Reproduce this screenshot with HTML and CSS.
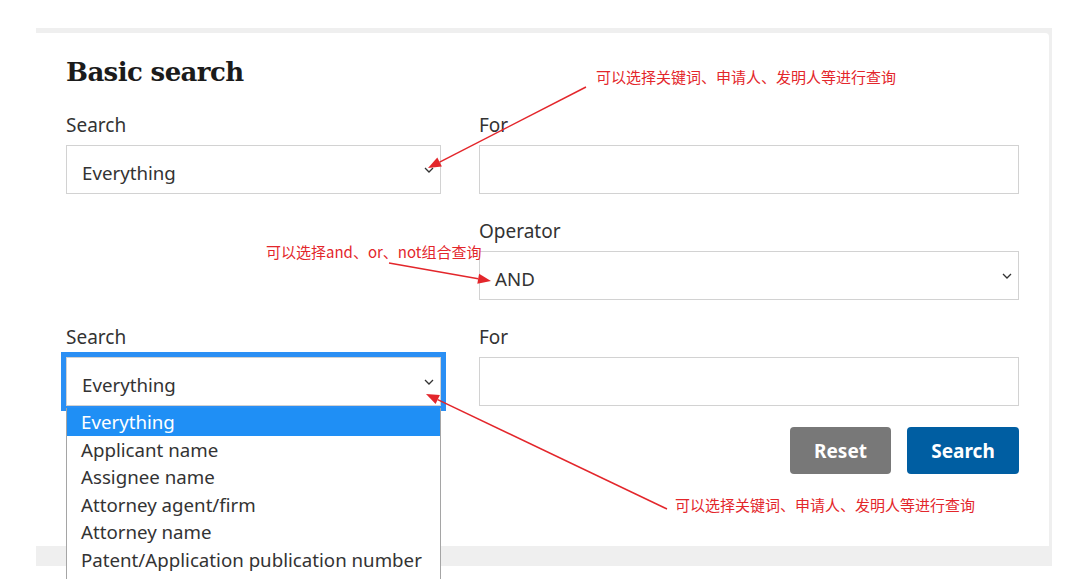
FILE: index.html
```html
<html lang="en">

<head>
    <meta charset="UTF-8">
    <meta name="viewport" content="width=device-width, initial-scale=1.0">
    <title>Basic search</title>

    <link rel="stylesheet" href="styles.css">
</head>

<body>
    <div class="panel">
        <section class="card">
            <h1>Basic search</h1>
            <div class="form">
                <div class="field">
                    <label>Search</label>
                    <div class="select">
                        <span>Everything</span>
                        <svg class="chevron" width="10" height="6" viewBox="0 0 10 6"><polyline points="1,1 5,5 9,1" /></svg>
                    </div>
                </div>
                <div class="field">
                    <label>For</label>
                    <div class="input"></div>
                </div>
                <div class="field operator">
                    <label>Operator</label>
                    <div class="select">
                        <span>AND</span>
                        <svg class="chevron" width="10" height="6" viewBox="0 0 10 6"><polyline points="1,1 5,5 9,1" /></svg>
                    </div>
                </div>
                <div class="field">
                    <label>Search</label>
                    <div class="select focus">
                        <span>Everything</span>
                        <svg class="chevron" width="10" height="6" viewBox="0 0 10 6"><polyline points="1,1 5,5 9,1" /></svg>
                        <ul class="options">
                            <li class="selected">Everything</li>
                            <li>Applicant name</li>
                            <li>Assignee name</li>
                            <li>Attorney agent/firm</li>
                            <li>Attorney name</li>
                            <li>Patent/Application publication number</li>
                        </ul>
                    </div>
                </div>
                <div class="field">
                    <label>For</label>
                    <div class="input"></div>
                </div>
                <div class="actions">
                    <button type="button" class="reset">Reset</button>
                    <button type="button" class="search">Search</button>
                </div>
            </div>
        </section>
    </div>

    <!-- red notes drawn over the screenshot -->
    <div class="notes">
        <svg width="1077" height="579" viewBox="0 0 1077 579">
            <line x1="586" y1="87" x2="439.6" y2="162.1" />
            <polygon points="428,168 441.9,166.5 437.3,157.6" />
            <line x1="389" y1="263" x2="478.2" y2="278.8" />
            <polygon points="491,281 477.3,283.7 479.1,273.8" />
            <line x1="667" y1="509" x2="437.7" y2="399.6" />
            <polygon points="426,394 439.9,395.1 435.6,404.1" />
        </svg>
        <span class="note note1">可以选择关键词、申请人、发明人等进行查询</span>
        <span class="note note2">可以选择and、or、not组合查询</span>
        <span class="note note3">可以选择关键词、申请人、发明人等进行查询</span>
    </div>
</body>

</html>
```

FILE: styles.css
```css
* {
    box-sizing: border-box;
    margin: 0;
    padding: 0;
}

html,
body {
    height: 100%;
    overflow: hidden;
}

body {
    background: white;
    font-family: "Noto Sans", "Open Sans", sans-serif;
    color: #333;
    position: relative;
}

.panel {
    margin: 28px 0 0 36px;
    width: 1016px;
    background: #efefef;
    padding: 5px 3px 20px 0;
}

.card {
    background: white;
    border-radius: 0 4px 0 0;
    padding: 22px 30px 72px 30px;
}

h1 {
    font-family: "DejaVu Serif", serif;
    font-size: 26px;
    line-height: 34px;
    letter-spacing: -0.6px;
    color: #1b1b1b;
    margin-bottom: 24px;
}

.form {
    display: grid;
    grid-template-columns: 375px 540px;
    column-gap: 38px;
    row-gap: 25px;
}

.field>label {
    display: block;
    font-size: 19px;
    line-height: 24px;
    margin-bottom: 8px;
}

.operator {
    grid-column: 2;
}

.select,
.input {
    height: 49px;
    border: 1px solid #d2d2d2;
    background: white;
}

.select {
    position: relative;
    display: flex;
    align-items: center;
    justify-content: space-between;
    padding: 5px 6px 0 15px;
    font-size: 18.7px;
}

.chevron {
    margin-top: -4px;
    fill: none;
    stroke: #333;
    stroke-width: 1.3;
}

.select.focus {
    outline: 5px solid #2a8ff4;
}

.options {
    list-style: none;
    position: absolute;
    top: calc(100% + 3px);
    left: -1px;
    right: -1px;
    padding-bottom: 30px;
    background: white;
    border-left: 1px solid #a5a5a5;
    border-right: 1px solid #a5a5a5;
}

.options li {
    height: 27.6px;
    line-height: 27.6px;
    padding-left: 14px;
    font-size: 18.7px;
    color: #333;
    white-space: nowrap;
}

.options .selected {
    background: #1f8ff5;
    color: white;
}

.actions {
    grid-column: 2;
    margin-top: -4px;
    display: flex;
    justify-content: flex-end;
    gap: 16px;
}

.actions>button {
    height: 47px;
    border: none;
    border-radius: 4px;
    color: white;
    font-family: "Noto Sans", sans-serif;
    font-weight: bold;
    font-size: 19px;
}

.reset {
    width: 101px;
    background: #787878;
}

.search {
    width: 112px;
    background: #005ea2;
}

.notes {
    position: absolute;
    top: 0;
    left: 0;
    width: 1077px;
    height: 579px;
    pointer-events: none;
}

.notes svg {
    position: absolute;
    top: 0;
    left: 0;
}

.notes line {
    stroke: #e3262b;
    stroke-width: 1.5;
}

.notes polygon {
    fill: #e3262b;
}

.note {
    position: absolute;
    font-family: "Noto Sans CJK SC", sans-serif;
    font-size: 15px;
    line-height: 15px;
    color: #e3262b;
    white-space: nowrap;
}

.note1 {
    left: 596px;
    top: 69px;
}

.note2 {
    left: 266px;
    top: 244px;
}

.note3 {
    left: 675px;
    top: 497px;
}
```
